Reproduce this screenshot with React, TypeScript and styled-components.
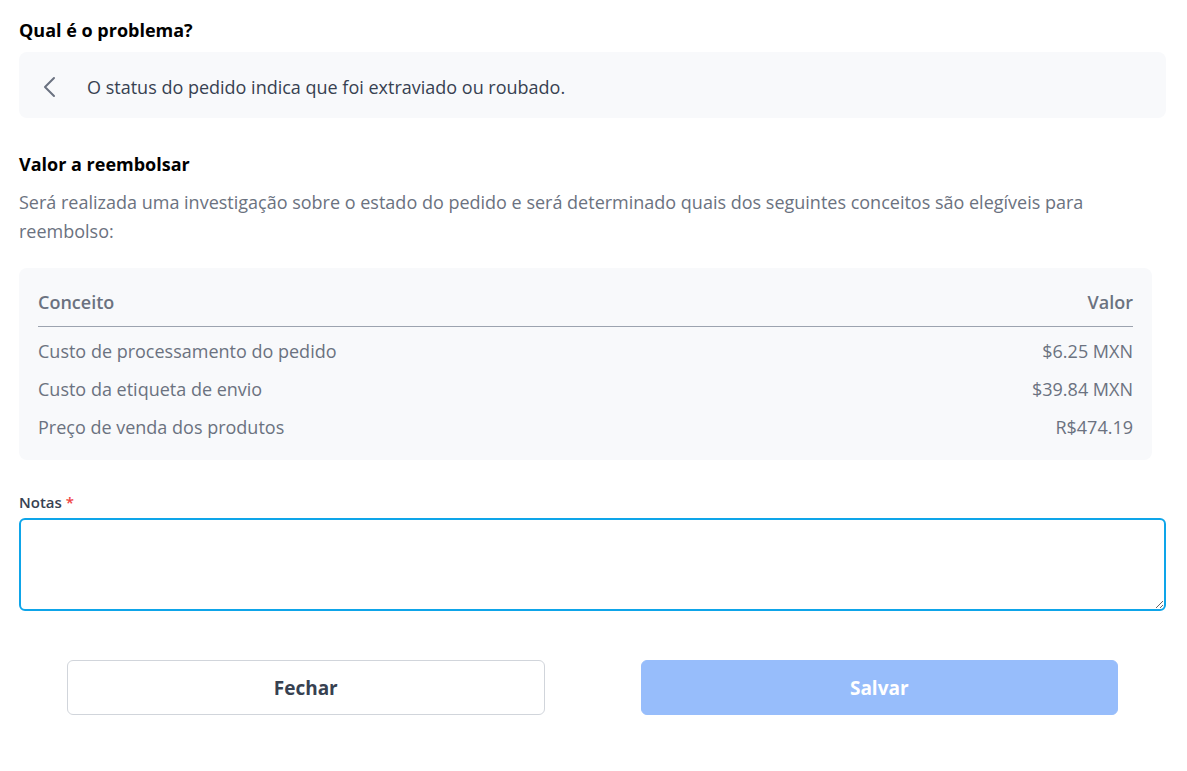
import React from "react";
import styled, { createGlobalStyle } from "styled-components";

const Global = createGlobalStyle`
  html, body { margin: 0; padding: 0; background: #ffffff; }
  body { font-family: "Open Sans", "Noto Sans", sans-serif; color: #111827; }
  * { box-sizing: border-box; }
`;

const Page = styled.div`
  padding: 16px 21px 0 19px;
  display: flex;
  flex-direction: column;
`;

const Heading = styled.h2`
  margin: 0;
  font-size: 18px;
  line-height: 28px;
  font-weight: 700;
  color: #000000;
`;

const ReasonBox = styled.div`
  margin-top: 8px;
  background: #f8f9fb;
  border-radius: 8px;
  height: 66px;
  display: flex;
  align-items: center;
  gap: 25px;
  padding-left: 19px;
  padding-top: 3px;
`;

const BackIcon = styled.svg`
  width: 24px;
  height: 24px;
  color: #6b7280;
  flex-shrink: 0;
`;

const ReasonText = styled.span`
  font-size: 18px;
  color: #374151;
`;

const Section = styled.div`
  margin-top: 32px;
  display: flex;
  flex-direction: column;
`;

const Paragraph = styled.p`
  margin: 10px 0 0;
  font-size: 18px;
  line-height: 29px;
  color: #6b7280;
`;

const TableCard = styled.div`
  margin-top: 22px;
  margin-right: 14px;
  background: #f8f9fb;
  border-radius: 8px;
  padding: 20px 19px 14px;
`;

const Table = styled.table`
  width: 100%;
  border-collapse: collapse;
`;

const Th = styled.th<{ $right?: boolean }>`
  text-align: ${(p) => (p.$right ? "right" : "left")};
  font-size: 18px;
  font-weight: 600;
  color: #6b7280;
  padding: 0 0 10px;
  line-height: 28px;
  border-bottom: 1px solid #9ca3af;
`;

const Td = styled.td<{ $right?: boolean; $first?: boolean }>`
  text-align: ${(p) => (p.$right ? "right" : "left")};
  font-size: 18px;
  color: #6b7280;
  line-height: 28px;
  padding: ${(p) => (p.$first ? "10px 0 5px" : "5px 0")};
`;

const Field = styled.div`
  margin-top: 30px;
  display: flex;
  flex-direction: column;
`;

const Label = styled.label`
  font-size: 15px;
  font-weight: 600;
  color: #374151;
  line-height: 24px;
`;

const Required = styled.span`
  color: #ef4444;
`;

const TextArea = styled.textarea`
  margin-top: 4px;
  height: 93px;
  width: 100%;
  border: 2px solid #0ea5e9;
  border-radius: 6px;
  outline: none;
  resize: vertical;
  font-family: inherit;
  font-size: 16px;
  padding: 8px 12px;
`;

const Actions = styled.div`
  margin-top: 49px;
  display: grid;
  grid-template-columns: 1fr 1fr;
`;

const Cell = styled.div`
  padding: 0 48px;
`;

const Button = styled.button<{ $primary?: boolean }>`
  width: 100%;
  height: 55px;
  border-radius: 6px;
  font-family: inherit;
  font-size: 19px;
  font-weight: 700;
  cursor: pointer;
  border: 1px solid ${(p) => (p.$primary ? "#97bdfb" : "#d1d5db")};
  background: ${(p) => (p.$primary ? "#97bdfb" : "#ffffff")};
  color: ${(p) => (p.$primary ? "#ffffff" : "#374151")};
`;

const rows = [
  ["Custo de processamento do pedido", "$6.25 MXN"],
  ["Custo da etiqueta de envio", "$39.84 MXN"],
  ["Preço de venda dos produtos", "R$474.19"],
];

export default function App() {
  return (
    <>
      <Global />
      <Page>
        <Heading>Qual é o problema?</Heading>
        <ReasonBox>
          <BackIcon viewBox="0 0 24 24" fill="none" stroke="currentColor" strokeWidth={2} strokeLinecap="round" strokeLinejoin="round">
            <path d="M16 3 L7 12 L16 21" />
          </BackIcon>
          <ReasonText>O status do pedido indica que foi extraviado ou roubado.</ReasonText>
        </ReasonBox>
        <Section>
          <Heading>Valor a reembolsar</Heading>
          <Paragraph>
            Será realizada uma investigação sobre o estado do pedido e será determinado quais dos seguintes conceitos são elegíveis para reembolso:
          </Paragraph>
          <TableCard>
            <Table>
              <thead>
                <tr>
                  <Th>Conceito</Th>
                  <Th $right>Valor</Th>
                </tr>
              </thead>
              <tbody>
                {rows.map(([c, v], i) => (
                  <tr key={c}>
                    <Td $first={i === 0}>{c}</Td>
                    <Td $right $first={i === 0}>{v}</Td>
                  </tr>
                ))}
              </tbody>
            </Table>
          </TableCard>
        </Section>
        <Field>
          <Label>
            Notas <Required>*</Required>
          </Label>
          <TextArea />
        </Field>
        <Actions>
          <Cell>
            <Button>Fechar</Button>
          </Cell>
          <Cell>
            <Button $primary>Salvar</Button>
          </Cell>
        </Actions>
      </Page>
    </>
  );
}
